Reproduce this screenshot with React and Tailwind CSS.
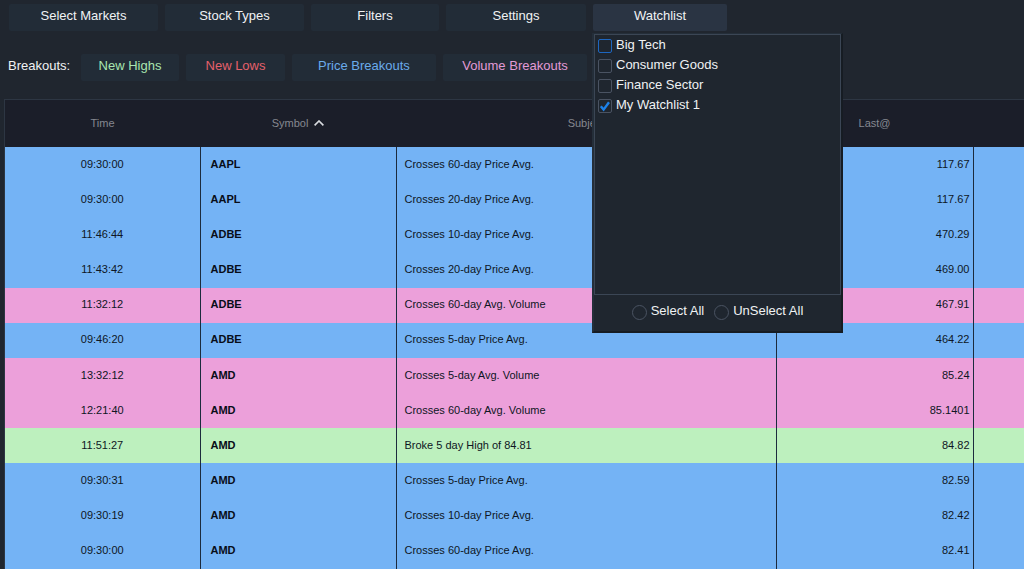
import { useState } from 'react'
import clsx from 'clsx'

const MENUS = [
  { label: 'Select Markets', width: 'w-[149px]' },
  { label: 'Stock Types', width: 'w-[139px]' },
  { label: 'Filters', width: 'w-32' },
  { label: 'Settings', width: 'w-[140px]' },
]

const BREAKOUTS = [
  { label: 'New Highs', className: 'w-[98px] text-[#a9e6b0]' },
  { label: 'New Lows', className: 'w-[99px] text-[#e5606b]' },
  { label: 'Price Breakouts', className: 'w-[144px] text-[#6aabeb]' },
  { label: 'Volume Breakouts', className: 'w-[144px] text-[#e29ad6]' },
]

const ROW_COLORS = {
  price: 'bg-[#74b3f5]',
  volume: 'bg-[#eca0da]',
  high: 'bg-[#bdf0be]',
}

const ALERTS = [
  { time: '09:30:00', symbol: 'AAPL', subject: 'Crosses 60-day Price Avg.', last: '117.67', type: 'price' },
  { time: '09:30:00', symbol: 'AAPL', subject: 'Crosses 20-day Price Avg.', last: '117.67', type: 'price' },
  { time: '11:46:44', symbol: 'ADBE', subject: 'Crosses 10-day Price Avg.', last: '470.29', type: 'price' },
  { time: '11:43:42', symbol: 'ADBE', subject: 'Crosses 20-day Price Avg.', last: '469.00', type: 'price' },
  { time: '11:32:12', symbol: 'ADBE', subject: 'Crosses 60-day Avg. Volume', last: '467.91', type: 'volume' },
  { time: '09:46:20', symbol: 'ADBE', subject: 'Crosses 5-day Price Avg.', last: '464.22', type: 'price' },
  { time: '13:32:12', symbol: 'AMD', subject: 'Crosses 5-day Avg. Volume', last: '85.24', type: 'volume' },
  { time: '12:21:40', symbol: 'AMD', subject: 'Crosses 60-day Avg. Volume', last: '85.1401', type: 'volume' },
  { time: '11:51:27', symbol: 'AMD', subject: 'Broke 5 day High of 84.81', last: '84.82', type: 'high' },
  { time: '09:30:31', symbol: 'AMD', subject: 'Crosses 5-day Price Avg.', last: '82.59', type: 'price' },
  { time: '09:30:19', symbol: 'AMD', subject: 'Crosses 10-day Price Avg.', last: '82.42', type: 'price' },
  { time: '09:30:00', symbol: 'AMD', subject: 'Crosses 60-day Price Avg.', last: '82.41', type: 'price' },
]

const WATCHLISTS = ['Big Tech', 'Consumer Goods', 'Finance Sector', 'My Watchlist 1']

function ToolButton({ className, children, ...props }) {
  return (
    <button type="button" className={clsx('h-[27px] shrink-0 rounded-xs pb-1 text-center', className)} {...props}>
      {children}
    </button>
  )
}

function WatchlistItem({ label, checked, focused, onChange }) {
  return (
    <label className="flex h-5 items-center gap-1">
      <span className="relative flex size-3.5 shrink-0">
        <input
          type="checkbox"
          checked={checked}
          onChange={onChange}
          className={clsx('size-3.5 appearance-none rounded-xs border outline-none', focused ? 'border-[#1d66c0]' : 'border-[#4a5362]')}
        />
        {checked && (
          <svg viewBox="0 0 14 14" className="pointer-events-none absolute inset-0 size-3.5" fill="none" stroke="#1c82ea" strokeWidth="2.4">
            <path d="M2.8 7.2 L5.6 10.6 L11 3.2" />
          </svg>
        )}
      </span>
      <span className="pb-0.5">{label}</span>
    </label>
  )
}

function WatchlistMenu() {
  const [selected, setSelected] = useState(['My Watchlist 1'])

  const toggle = (name) =>
    setSelected((s) => (s.includes(name) ? s.filter((n) => n !== name) : [...s, name]))

  return (
    <div className="absolute top-full -left-px z-10 mt-0.5 w-[251px] border-2 border-t border-[#242e39] border-r-[#161c23] border-b-[#161c23] bg-[#1f262f] text-[#f0f2f4]">
      <div className="h-[261px] border border-[#3b4655] p-[3px] pt-px">
        {WATCHLISTS.map((name, i) => (
          <WatchlistItem
            key={name}
            label={name}
            focused={i === 0}
            checked={selected.includes(name)}
            onChange={() => toggle(name)}
          />
        ))}
      </div>
      <div className="flex h-9 items-center justify-center gap-2.5 pb-0.5">
        {[
          { label: 'Select All', value: WATCHLISTS },
          { label: 'UnSelect All', value: [] },
        ].map(({ label, value }) => (
          <label key={label} className="flex items-center gap-1">
            <input
              type="radio"
              name="watchlist-select"
              onChange={() => setSelected(value)}
              className="size-[15px] shrink-0 appearance-none rounded-full border border-[#4a5362] checked:bg-[#1c82ea]"
            />
            <span className="pb-0.5">{label}</span>
          </label>
        ))}
      </div>
    </div>
  )
}

function AlertTable() {
  return (
    <table className="h-full w-full table-fixed border-collapse text-[11px] leading-4">
      <colgroup>
        <col className="w-[195px]" />
        <col className="w-[196px]" />
        <col className="w-[380px]" />
        <col className="w-[197px]" />
        <col />
      </colgroup>
      <thead>
        <tr className="h-[47px] bg-[#1b1e29] text-[#858890] *:p-0 *:pb-0.5 *:font-normal">
          <th scope="col">Time</th>
          <th scope="col">
            <button type="button" className="inline-flex items-center gap-1.5">
              Symbol
              <svg viewBox="0 0 10 6" className="h-1.5 w-2.5" fill="none" stroke="#d9dce0" strokeWidth="1.6">
                <path d="M0.6 5.4 L5 1 L9.4 5.4" />
              </svg>
            </button>
          </th>
          <th scope="col">Subject</th>
          <th scope="col">Last@</th>
          <td />
        </tr>
      </thead>
      <tbody>
        {ALERTS.map((a, i) => (
          <tr key={i} className={clsx('text-[#0e1624] *:p-0 *:pb-0.5', ROW_COLORS[a.type])}>
            <td className="border-r border-[#1c2b3d] text-center">{a.time}</td>
            <td className="border-r border-[#1c2b3d]">
              <span className="pl-2.5 font-bold text-[#080d18]">{a.symbol}</span>
            </td>
            <td className="border-r border-[#1c2b3d]">
              <span className="pl-2">{a.subject}</span>
            </td>
            <td className="border-r border-[#1c2b3d] text-right">
              <span className="pr-[3px]">{a.last}</span>
            </td>
            <td />
          </tr>
        ))}
      </tbody>
    </table>
  )
}

export default function App() {
  const [open, setOpen] = useState(true)

  return (
    <div className="flex h-screen min-h-[500px] flex-col overflow-hidden bg-[#20262f] font-['Liberation_Sans',Arial,sans-serif] text-[13px] leading-4 text-[#f0f2f4]">
      <nav className="flex gap-[7px] pt-1 pl-[9px]">
        {MENUS.map(({ label, width }) => (
          <ToolButton key={label} className={clsx('bg-[#222c37]', width)}>{label}</ToolButton>
        ))}
        <div className="relative">
          <ToolButton className="w-[134px] bg-[#2a3443]" aria-expanded={open} onClick={() => setOpen(!open)}>
            Watchlist
          </ToolButton>
          {open && <WatchlistMenu />}
        </div>
      </nav>

      <div className="flex items-center gap-[7px] pt-[23px] pb-[18px] pl-2">
        <span className="w-[66px] shrink-0 pb-1">Breakouts:</span>
        {BREAKOUTS.map(({ label, className }) => (
          <ToolButton key={label} className={clsx('bg-[#222c37]', className)}>{label}</ToolButton>
        ))}
      </div>

      <main className="ml-1 min-h-0 flex-1 border-t border-l border-[#2d3643]">
        <AlertTable />
      </main>
    </div>
  )
}
